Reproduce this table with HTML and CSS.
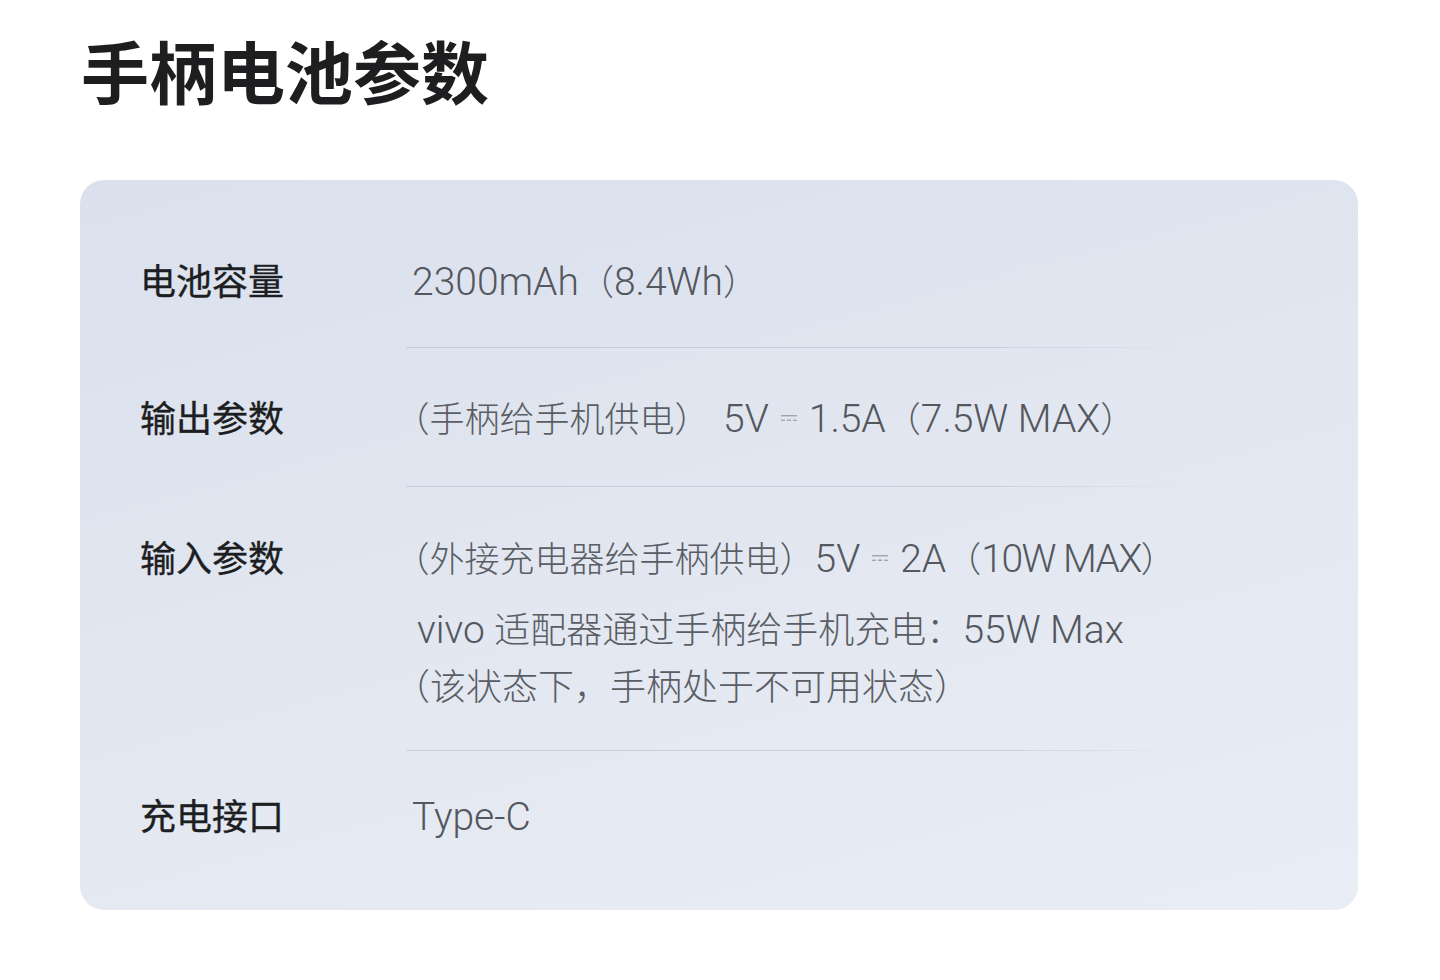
FILE: index.html
```html
<!DOCTYPE html>
<html lang="zh-CN">
<head>
<meta charset="utf-8">
<title>手柄电池参数</title>
<link rel="stylesheet" href="styles.css">
</head>
<body>
<main class="page">
  <h1 class="title">手柄电池参数</h1>
  <section class="card">
    <div class="row row-1">
      <div class="label">电池容量</div>
      <div class="value">
        <p class="line"><span class="en">2300mAh</span>（<span class="en">8.4Wh</span>）</p>
      </div>
    </div>
    <div class="divider"></div>
    <div class="row row-2">
      <div class="label">输出参数</div>
      <div class="value">
        <p class="line"><span class="trim">（</span>手柄给手机供电）<span class="en volt"> 5V</span><svg class="dc" viewBox="0 0 18 10" width="18" height="10"><rect x="1" y="2" width="16" height="1.4"/><rect x="1" y="6.6" width="4" height="1.4"/><rect x="7" y="6.6" width="4" height="1.4"/><rect x="13" y="6.6" width="4" height="1.4"/></svg><span class="en">1.5A</span>（<span class="en">7.5W MAX</span>）</p>
      </div>
    </div>
    <div class="divider"></div>
    <div class="row row-3">
      <div class="label">输入参数</div>
      <div class="value">
        <p class="line"><span class="trim">（</span>外接充电器给手柄供电）<span class="en">5V</span><svg class="dc" viewBox="0 0 18 10" width="18" height="10"><rect x="1" y="2" width="16" height="1.4"/><rect x="1" y="6.6" width="4" height="1.4"/><rect x="7" y="6.6" width="4" height="1.4"/><rect x="13" y="6.6" width="4" height="1.4"/></svg><span class="en">2A</span>（<span class="en tight">10W MAX</span>）</p>
        <p class="line line-gap indent wide"><span class="en">vivo </span>适配器通过手柄给手机充电：<span class="en">55W Max</span></p>
        <p class="line wide"><span class="trim">（</span>该状态下，手柄处于不可用状态）</p>
      </div>
    </div>
    <div class="divider"></div>
    <div class="row row-4">
      <div class="label">充电接口</div>
      <div class="value">
        <p class="line"><span class="en">Type-C</span></p>
      </div>
    </div>
  </section>
</main>
</body>
</html>
```

FILE: styles.css
```css
* {
  box-sizing: border-box;
}

html,
body {
  margin: 0;
  padding: 0;
  background: #ffffff;
}

body {
  font-family: "Noto Sans CJK SC", "Noto Sans", sans-serif;
  color: #1f2024;
}

.page {
  width: 1440px;
  height: 980px;
  padding: 29px 0 0 80px;
}

.title {
  margin: 0 0 69px 1px;
  font-size: 68px;
  line-height: 82px;
  font-weight: 700;
  color: #1e1e20;
}

.card {
  width: 1278px;
  height: 730px;
  border-radius: 24px;
  background: linear-gradient(165deg, #dae1ed 0%, #e1e6f0 45%, #e9edf5 100%);
  padding: 31px 0 0 60px;
}

.row {
  display: flex;
  align-items: flex-start;
}

.row-1 {
  padding: 40px 0 39px;
}

.row-2 {
  padding: 40px 0 41px;
}

.row-3 {
  padding: 41px 0 37px;
}

.row-4 {
  padding: 35px 0 0;
}

.label {
  width: 272px;
  flex: none;
  font-size: 36px;
  line-height: 57px;
  font-weight: 400;
  color: #1d1e22;
  -webkit-text-stroke: 0.35px #1d1e22;
}

.value {
  flex: 1;
  font-size: 35px;
  line-height: 57px;
  font-weight: 300;
  color: #5a5d63;
}

.line {
  margin: 0;
  white-space: pre;
}

.wide {
  font-size: 36px;
}

.en {
  font-family: Roboto, "Noto Sans", sans-serif;
  font-size: 39px;
  font-weight: 300;
  line-height: 1;
  color: #54575d;
}

.tight {
  letter-spacing: -1.5px;
}

.volt {
  padding-left: 4px;
}

.line-gap {
  margin-top: 14px;
}

.indent {
  padding-left: 5px;
}

.trim {
  font-feature-settings: "halt" 1;
}

.dc {
  display: inline-block;
  width: 18px;
  height: 10px;
  margin: 0 11px 0 11px;
  vertical-align: 9px;
  fill: #a2a6ad;
}

.divider {
  height: 1px;
  width: 780px;
  margin-left: 266px;
  background: linear-gradient(90deg, rgba(190, 198, 212, 0.75) 0%, rgba(190, 198, 212, 0.7) 75%, rgba(190, 198, 212, 0) 100%);
}
```
